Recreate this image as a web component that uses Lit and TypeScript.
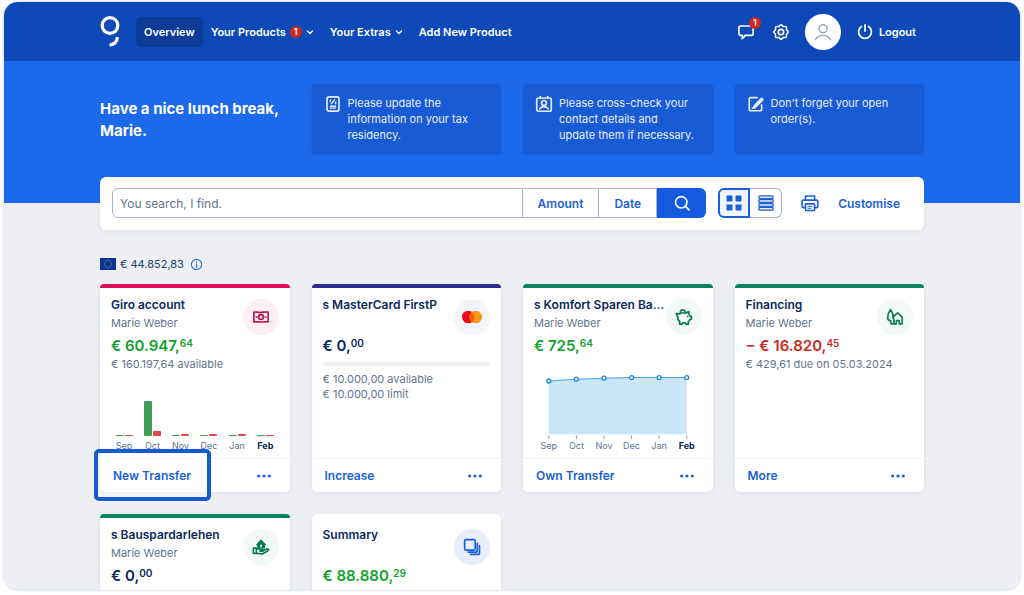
import { LitElement, html, svg, css, nothing } from "lit";
import { customElement, property } from "lit/decorators.js";
import { classMap } from "lit/directives/class-map.js";

const MONTHS = ["Sep", "Oct", "Nov", "Dec", "Jan", "Feb"];

const glyph = (size: number, body: unknown) => html`<svg
  width=${size}
  height=${size}
  viewBox="0 0 24 24"
  fill="none"
  stroke="currentColor"
  stroke-width="2.2"
  stroke-linecap="round"
  stroke-linejoin="round"
  aria-hidden="true"
>${body}</svg>`;

const icons = {
  logo: html`<svg width="20" height="31" viewBox="0 0 20 31" fill="none" stroke="#fff" stroke-width="3.2" aria-hidden="true">
    <circle cx="10" cy="9.5" r="7.8" />
    <path d="M17.4 21.2C17 25.600 14 28.600 9.600 29.200" />
  </svg>`,
  chevron: html`<svg width="8" height="8" viewBox="0 0 8 8" fill="none" stroke="currentColor" stroke-width="1.3" stroke-linecap="round" stroke-linejoin="round" aria-hidden="true">
    <path d="M1.400 3L4 5.500 6.600 3" />
  </svg>`,
  chat: glyph(18, svg`<path d="M5 4h14.500a2 2 0 0 1 2 2v8.500a2 2 0 0 1-2 2H11L7 21v-4.500H5a2.500 2.500 0 0 1-2.500-2.500V6.500A2.500 2.500 0 0 1 5 4z" />`),
  gear: glyph(18, svg`<path d="M12 2.400c1.600 0 1.800 1.900 3.100 2.300s2.700-.8 3.800.4 0 2.600.4 3.800 2.300 1.500 2.300 3.100-1.900 1.800-2.300 3.100.8 2.700-.4 3.800-2.600 0-3.800.4-1.500 2.300-3.100 2.300-1.800-1.900-3.100-2.300-2.700.8-3.800-.4 0-2.600-.4-3.800-2.300-1.500-2.300-3.100 1.900-1.800 2.300-3.100-.8-2.700.4-3.800 2.600 0 3.800-.4 1.500-2.300 3.100-2.300z" stroke-width="2" /><circle cx="12" cy="12" r="3.600" />`),
  user: glyph(20, svg`<circle cx="12" cy="8" r="4.800" stroke-width="1.700" /><path d="M3 21c1.800-3.400 5-5 9-5s7.200 1.600 9 5" stroke-width="1.700" />`),
  power: glyph(18, svg`<path d="M12 2.500v8.500M7.300 4.600a8.600 8.600 0 1 0 9.400 0" />`),
  tax: glyph(18, svg`<rect x="4" y="2.500" width="16" height="19" rx="2.500" /><path d="M10 11.500l4-5M8.500 6.500v2M15.500 9.500v2" stroke-width="2" /><path d="M8.500 15h7M8.500 17.600h7" stroke-width="1.700" />`),
  contact: glyph(18, svg`<rect x="2.300" y="4" width="19.400" height="17.700" rx="2.500" /><circle cx="12" cy="10.500" r="3.200" /><path d="M6.300 18.400c1.200-2.200 3.200-3 5.700-3s4.500.8 5.700 3M7 2v2.500M17 2v2.500" />`),
  edit: glyph(18, svg`<path d="M13.500 3.500H4.500a1.500 1.500 0 0 0-1.500 1.500v14.500a1.500 1.500 0 0 0 1.500 1.500H18a1.500 1.500 0 0 0 1.500-1.500V13" /><path d="M11 13.200L19.500 4.600l1.600 1.600-8.600 8.500-3.300 1.400z" stroke-width="2.600" /><path d="M7 17.300h4" />`),
  search: glyph(18, svg`<circle cx="11" cy="11" r="7.600" /><path d="M16.600 16.600l4.600 4.600" />`),
  grid: html`<svg width="16" height="16" viewBox="0 0 16 16" fill="currentColor" aria-hidden="true">
    <rect x="0.500" y="0.500" width="6" height="6" rx="0.800" /><rect x="9.500" y="0.500" width="6" height="6" rx="0.800" />
    <rect x="0.500" y="9.500" width="6" height="6" rx="0.800" /><rect x="9.500" y="9.500" width="6" height="6" rx="0.800" />
  </svg>`,
  list: html`<svg width="16" height="16" viewBox="0 0 16 16" fill="#e8effc" stroke="currentColor" stroke-width="1.300" aria-hidden="true">
    <rect x="0.900" y="0.900" width="14.200" height="2.700" rx="0.900" /><rect x="0.900" y="4.700" width="14.200" height="2.700" rx="0.900" />
    <rect x="0.900" y="8.600" width="14.200" height="2.700" rx="0.900" /><rect x="0.900" y="12.400" width="14.200" height="2.700" rx="0.900" />
  </svg>`,
  print: glyph(20, svg`<path d="M6.500 8.500V3.500h11v5M6.500 17.500H4a1.500 1.500 0 0 1-1.500-1.500v-6A1.500 1.500 0 0 1 4 8.500h16a1.500 1.500 0 0 1 1.500 1.500v6a1.500 1.500 0 0 1-1.500 1.500h-2.500" stroke-width="1.900" /><rect x="6.500" y="13" width="11" height="8" rx="1" stroke-width="1.900" /><path d="M9.500 16h5M9.500 18.300h3.500" stroke-width="1.200" />`),
  info: glyph(13, svg`<circle cx="12" cy="12" r="9.500" stroke-width="2" /><path d="M12 11v6M12 7.200v.3" />`),
  flag: html`<svg width="16" height="12" viewBox="0 0 16 12" aria-hidden="true">
    <rect width="16" height="12" fill="#0d3494" /><circle cx="8" cy="6" r="3.600" fill="none" stroke="#8d975f" stroke-width="1" stroke-dasharray="1 0.880" />
  </svg>`,
  cash: glyph(18, svg`<path d="M2.500 5.500c3-.8 5 .8 9.500.4s6-1 9.500-.4v13c-3.500-.6-5 .2-9.500.2s-6.500-.5-9.500-.2z" /><circle cx="12" cy="12" r="3.200" /><path d="M5.500 12h1M17.500 12h1" />`),
  card: html`<svg width="22" height="14" viewBox="0 0 22 14" aria-hidden="true">
    <circle cx="7.300" cy="7" r="6.300" fill="#eb0a1e" /><circle cx="14.700" cy="7" r="6.300" fill="#f79a1c" />
    <path d="M11 1.900a6.300 6.300 0 0 1 0 10.200a6.300 6.300 0 0 1 0-10.200z" fill="#fb5b0c" />
  </svg>`,
  pig: glyph(18, svg`<path d="M6 7.800L1.800 7.500c.2 1.800.9 3 2 3.900-.5 2.800.4 5 2.400 6.600v3.500h3.200l.8-1.700h3.600l.8 1.700h3.200v-3.300c1-.9 1.600-1.700 1.900-2.700l2.100-.7v-4h-1.800c-.4-1.200-1-2-1.800-2.800l.5-2.900c-1.500 0-2.800.6-3.700 1.500H10c-1.700 0-3 .4-4 1.200z" /><path d="M7 6.500c-.2-2.400 1.300-4 3.200-4 1.700 0 3 1 3.400 2.800M17 11.300v.2" />`),
  house: glyph(18, svg`<path d="M9.600 13.500c.3-4-1.300-8.300-3.600-11.200C3.700 5.200 2.200 9.200 2.200 12.700c0 2.600 1.500 4.300 3.800 4.300M6.300 17v2.500c0 1 .6 1.700 1.600 1.700" /><path d="M8 21.200h2.500v-6.500M9.200 12.200l6.300-5.600 6.100 5.300v9.300h-4v-4.500h-3.800v4.500h-3.500" />`),
  hand: glyph(18, svg`<path d="M6 9L12 2.800 18 9h-1.300v4.200H7.600V9z" fill="currentColor" stroke-width="1.400" /><path d="M12 9.800v2" stroke="#f4f9f7" stroke-width="2" /><path d="M1.800 13.500h4v7h-4zM5.800 15c1.800-1.200 3.700-.9 5.200.2h3.400c1.300 0 1.300 2.200 0 2.200h-4M14.800 16.800l5.200-2.200c1.700-.5 2.700 1.300 1.200 2.300l-6.700 4.100c-1.700.7-4.700-.2-8.700-.9" />`),
  stack: glyph(18, svg`<rect x="2.200" y="2.200" width="14" height="14" rx="1.500" /><path d="M7 18.900h10.500a1.500 1.500 0 0 0 1.500-1.500V7M10 21.900h10.500a1.500 1.500 0 0 0 1.500-1.500V10" />`),
  dots: html`<svg width="14" height="4" viewBox="0 0 14 4" fill="currentColor" aria-hidden="true">
    <circle cx="1.700" cy="2" r="1.600" /><circle cx="7" cy="2" r="1.600" /><circle cx="12.300" cy="2" r="1.600" />
  </svg>`,
};

interface Account {
  title: string;
  owner?: string;
  amount: string;
  cents: string;
  amountTone: "plus" | "minus" | "plain";
  bar: "pink" | "indigo" | "green" | "none";
  icon: unknown;
  iconTone: "pink" | "grey" | "green" | "blue";
  notes?: string[];
  meter?: boolean;
  chart?: "bars" | "area";
  action: string;
  highlight?: boolean;
}

const ACCOUNTS: Account[] = [
  { title: "Giro account", owner: "Marie Weber", amount: "€ 60.947,", cents: "64", amountTone: "plus", bar: "pink", icon: icons.cash, iconTone: "pink", notes: ["€ 160.197,64 available"], chart: "bars", action: "New Transfer", highlight: true },
  { title: "s MasterCard FirstP", amount: "€ 0,", cents: "00", amountTone: "plain", bar: "indigo", icon: icons.card, iconTone: "grey", notes: ["€ 10.000,00 available", "€ 10.000,00 limit"], meter: true, action: "Increase" },
  { title: "s Komfort Sparen Ba...", owner: "Marie Weber", amount: "€ 725,", cents: "64", amountTone: "plus", bar: "green", icon: icons.pig, iconTone: "green", chart: "area", action: "Own Transfer" },
  { title: "Financing", owner: "Marie Weber", amount: "− € 16.820,", cents: "45", amountTone: "minus", bar: "green", icon: icons.house, iconTone: "green", notes: ["€ 429,61 due on 05.03.2024"], action: "More" },
  { title: "s Bauspardarlehen", owner: "Marie Weber", amount: "€ 0,", cents: "00", amountTone: "plain", bar: "green", icon: icons.hand, iconTone: "green", action: "More" },
  { title: "Summary", amount: "€ 88.880,", cents: "29", amountTone: "plus", bar: "none", icon: icons.stack, iconTone: "blue", action: "More" },
];

const reset = css`
  * { box-sizing: border-box; }
  h1, h2, p { margin: 0; }
  svg { display: block; flex: none; }
  button, input { font: inherit; color: inherit; margin: 0; padding: 0; border: 0; background: none; }
  button { cursor: pointer; }
  a { color: inherit; text-decoration: none; }
`;

@customElement("month-chart")
class MonthChart extends LitElement {
  @property() kind: "bars" | "area" = "bars";

  static styles = [reset, css`
    :host { display: block; color: #62748f; }
    .months { display: grid; grid-template-columns: repeat(6, 1fr); font-size: 9px; line-height: 12px; text-align: center; }
    .now { color: #0a285c; font-weight: 700; }
    .plot { display: grid; grid-template-columns: repeat(6, 1fr); height: 35px; margin-bottom: 4px; }
    .pair { display: flex; justify-content: center; align-items: flex-end; gap: 1px; }
    .bar { width: 8px; border-radius: 1px; }
    .in { background: #3f9c55; }
    .out { background: #e5484d; }
    .area { padding: 0 2px; }
    .area svg { width: 100%; height: auto; }
  `];

  private bars() {
    const data = [[1, 1], [35, 5], [1, 2], [1, 2], [1, 2], [1, 1]];
    return html`<div class="plot">
      ${data.map(([a, b]) => html`<div class="pair">
        <div class="bar in" style="height:${a}px"></div>
        <div class="bar out" style="height:${b}px"></div>
      </div>`)}
    </div>`;
  }

  private area() {
    const xs = [13.75, 41.25, 68.75, 96.25, 123.75, 151.25];
    const ys = [7, 5.2, 4.2, 3.6, 3.6, 3.6];
    const line = xs.map((x, i) => `${x},${ys[i]}`).join(" ");
    return html`<svg viewBox="0 0 165 66" aria-hidden="true">
      <polygon points="${xs[0]},60 ${line} ${xs[5]},60" fill="#cbe5f9" />
      <polyline points=${line} fill="none" stroke="#4ba3e0" stroke-width="1" />
      ${xs.map((x, i) => svg`
        <path d="M${x} 61V65" stroke="#79aede" />
        <circle cx=${x} cy=${ys[i]} r="2" fill="#fff" stroke="#1b8ad6" stroke-width="1.3" />`)}
    </svg>`;
  }

  render() {
    return html`<div class=${this.kind}>
      ${this.kind === "bars" ? this.bars() : this.area()}
      <div class="months">
        ${MONTHS.map((m, i) => html`<span class=${classMap({ now: i === 5 })}>${m}</span>`)}
      </div>
    </div>`;
  }
}

@customElement("account-card")
class AccountCard extends LitElement {
  @property({ attribute: false }) account!: Account;

  static styles = [reset, css`
    :host { display: flex; min-width: 0; }
    .card { flex: 1; min-width: 0; min-height: 208px; display: flex; flex-direction: column; background: #fff; border-radius: 5px; box-shadow: 0 1px 4px rgba(20, 50, 100, 0.08); }
    .strip { height: 4px; border-radius: 5px 5px 0 0; }
    .strip.pink { background: #dc0f5c; }
    .strip.indigo { background: #2e2a8f; }
    .strip.green { background: #07845b; }
    .body { padding: 8px 11px 0; }
    .head { display: grid; grid-template-columns: minmax(0, 1fr) 36px; }
    .title { font-size: 12px; line-height: 18px; font-weight: 600; color: #0a285c; overflow: hidden; white-space: nowrap; text-overflow: ellipsis; }
    .owner { min-height: 18px; font-size: 11px; line-height: 18px; color: #62748f; }
    .amount { margin-top: 2px; display: flex; font-size: 15px; line-height: 23px; font-weight: 600; white-space: nowrap; }
    .cents { font-size: 10px; line-height: 18px; }
    .plus { color: #0fa32b; }
    .minus { color: #cc2a1e; }
    .plain { color: #0a285c; }
    .badge { width: 36px; height: 36px; margin-top: 3px; border-radius: 50%; display: grid; place-items: center; }
    .badge.pink { background: #fdeff4; color: #b90f51; }
    .badge.grey { background: #f4f5f8; }
    .badge.green { background: #f3f9f7; color: #0a7a52; }
    .badge.blue { background: #e7edfb; color: #1b5fd8; }
    .meter { height: 4px; margin: 5px 0 6px; border-radius: 2px; background: #eef0f2; }
    .note { font-size: 11px; line-height: 15px; color: #62748f; white-space: nowrap; }
    .chart { margin: auto 10px 6px; }
    .foot { margin-top: auto; padding: 0 19px 0 13px; height: 34px; border-top: 1px solid #edf0f3; display: flex; justify-content: space-between; align-items: center; color: #1b5fd8; }
    .chart + .foot { margin-top: 0; }
    .action { position: relative; font-size: 12px; line-height: 20px; font-weight: 600; }
    .label { position: relative; }
    .ring::before { content: ""; position: absolute; inset: -17px -20px -15px -19px; border: 4px solid #155bd0; border-radius: 5px; background: rgba(255, 255, 255, 0.4); }
    .more { height: 20px; display: flex; align-items: center; }
  `];

  render() {
    const a = this.account;
    return html`<article class="card">
      <div class="strip ${a.bar}"></div>
      <div class="body">
        <div class="head">
          <div>
            <h2 class="title">${a.title}</h2>
            <p class="owner">${a.owner ?? nothing}</p>
            <p class="amount ${a.amountTone}">${a.amount}<span class="cents">${a.cents}</span></p>
          </div>
          <div class="badge ${a.iconTone}">${a.icon}</div>
        </div>
        ${a.meter ? html`<div class="meter"></div>` : nothing}
        ${(a.notes ?? []).map((n) => html`<p class="note">${n}</p>`)}
      </div>
      ${a.chart ? html`<month-chart class="chart" .kind=${a.chart}></month-chart>` : nothing}
      <div class="foot">
        <button class=${classMap({ action: true, ring: !!a.highlight })}><span class="label">${a.action}</span></button>
        <button class="more" aria-label="More options">${icons.dots}</button>
      </div>
    </article>`;
  }
}

@customElement("app-root")
class AppRoot extends LitElement {
  static styles = [reset, css`
    :host { display: block; height: 100vh; padding: 2px 4px 5px; box-sizing: border-box; background: #fff; font-family: Inter, "Liberation Sans", sans-serif; color: #0a285c; }
    .frame { height: 100%; overflow: hidden; border-radius: 14px; background: #edeff3; box-shadow: 0 0 3px rgba(30, 70, 140, 0.3); }
    .wrap { max-width: 824px; margin: 0 auto; }
    .top { background: #0d4ab8; color: #fff; }
    .bar { height: 59px; display: flex; align-items: center; justify-content: space-between; font-size: 11px; line-height: 16px; font-weight: 600; white-space: nowrap; }
    .nav { display: flex; align-items: center; }
    .logo { margin-right: 16px; }
    .item { height: 30px; padding: 0 8px; display: flex; align-items: center; gap: 4px; border-radius: 5px; }
    .current { background: #0c3c97; }
    .count { width: 12px; height: 12px; border-radius: 50%; background: #cb2a1f; color: #fff; font-size: 9px; line-height: 12px; text-align: center; }
    .tools { display: flex; align-items: center; gap: 15px; }
    .chat { position: relative; margin-right: 2px; }
    .chat .count { position: absolute; top: -6px; right: -6px; }
    .avatar { width: 36px; height: 36px; border-radius: 50%; background: #fff; color: #9aa5b8; display: grid; place-items: center; }
    .logout { display: flex; align-items: center; gap: 5px; padding-right: 8px; }
    .hero { background: #1c69ec; padding: 23px 0 49px; color: #fff; }
    .row { display: grid; grid-template-columns: repeat(4, minmax(0, 1fr)); gap: 22px; }
    .hello { padding-top: 14px; font-size: 15px; line-height: 22px; font-weight: 700; white-space: nowrap; }
    .tile { min-height: 70px; padding: 11px 17px 11px 12px; display: flex; gap: 6px; background: #195bd4; border-radius: 4px; font-size: 11px; line-height: 16px; color: #e6eefc; box-shadow: 0 1px 2px rgba(10, 50, 130, 0.15); }
    .finder { position: relative; margin-top: -26px; padding: 11px 12px 12px; display: flex; align-items: center; background: #fff; border-radius: 6px; box-shadow: 0 1px 5px rgba(20, 50, 100, 0.08); color: #1b5fd8; font-size: 12px; font-weight: 600; }
    .query { flex: 1; min-width: 0; height: 30px; padding: 0 7px; border: 1px solid #aab4c4; border-radius: 6px 0 0 6px; font-weight: 400; color: #0a285c; }
    .query::placeholder { color: #62748f; opacity: 1; }
    .filter { height: 30px; padding: 0 15px; border: 1px solid #aab4c4; border-left-width: 0; }
    .go { width: 49px; height: 30px; display: grid; place-items: center; background: #155bdf; color: #fff; border-radius: 0 6px 6px 0; }
    .views { display: flex; margin-left: 12px; }
    .view { width: 32px; height: 30px; display: grid; place-items: center; border: 1px solid #aab4c4; border-left: 0; border-radius: 0 6px 6px 0; }
    .on { border: 2px solid #1b5fd8; border-radius: 6px 0 0 6px; background: #eff4fd; }
    .print { margin: 0 18px; }
    .custom { padding-right: 12px; }
    .total { display: flex; align-items: center; gap: 4px; margin: 26px 0 12px; font-size: 11px; line-height: 16px; color: #24406f; }
    .info { margin-left: 2px; color: #2c6be0; }
  `];

  render() {
    return html`<div class="frame">
      <header class="top">
        <div class="wrap bar">
          <nav class="nav">
            <a class="logo" href="#" aria-label="Home">${icons.logo}</a>
            <a class="item current" href="#">Overview</a>
            <a class="item" href="#">Your Products <span class="count">1</span>${icons.chevron}</a>
            <a class="item" href="#">Your Extras ${icons.chevron}</a>
            <a class="item" href="#">Add New Product</a>
          </nav>
          <div class="tools">
            <button class="chat" aria-label="Messages">${icons.chat}<span class="count">1</span></button>
            <button aria-label="Settings">${icons.gear}</button>
            <button class="avatar" aria-label="Profile">${icons.user}</button>
            <button class="logout">${icons.power}Logout</button>
          </div>
        </div>
      </header>
      <section class="hero">
        <div class="wrap row">
          <h1 class="hello">Have a nice lunch break,<br />Marie.</h1>
          <a class="tile" href="#">${icons.tax}<span>Please update the information on your tax residency.</span></a>
          <a class="tile" href="#">${icons.contact}<span>Please cross-check your contact details and update them if necessary.</span></a>
          <a class="tile" href="#">${icons.edit}<span>Don't forget your open order(s).</span></a>
        </div>
      </section>
      <main class="wrap">
        <form class="finder" @submit=${(e: Event) => e.preventDefault()}>
          <input class="query" type="search" aria-label="Search" placeholder="You search, I find." />
          <button class="filter" type="button">Amount</button>
          <button class="filter" type="button">Date</button>
          <button class="go" aria-label="Search">${icons.search}</button>
          <div class="views">
            <button class="view on" type="button" aria-label="Grid view" aria-pressed="true">${icons.grid}</button>
            <button class="view" type="button" aria-label="List view" aria-pressed="false">${icons.list}</button>
          </div>
          <button class="print" type="button" aria-label="Print">${icons.print}</button>
          <button class="custom" type="button">Customise</button>
        </form>
        <p class="total">${icons.flag}<span>€ 44.852,83</span><span class="info">${icons.info}</span></p>
        <div class="row">
          ${ACCOUNTS.map((a) => html`<account-card .account=${a}></account-card>`)}
        </div>
      </main>
    </div>`;
  }
}
